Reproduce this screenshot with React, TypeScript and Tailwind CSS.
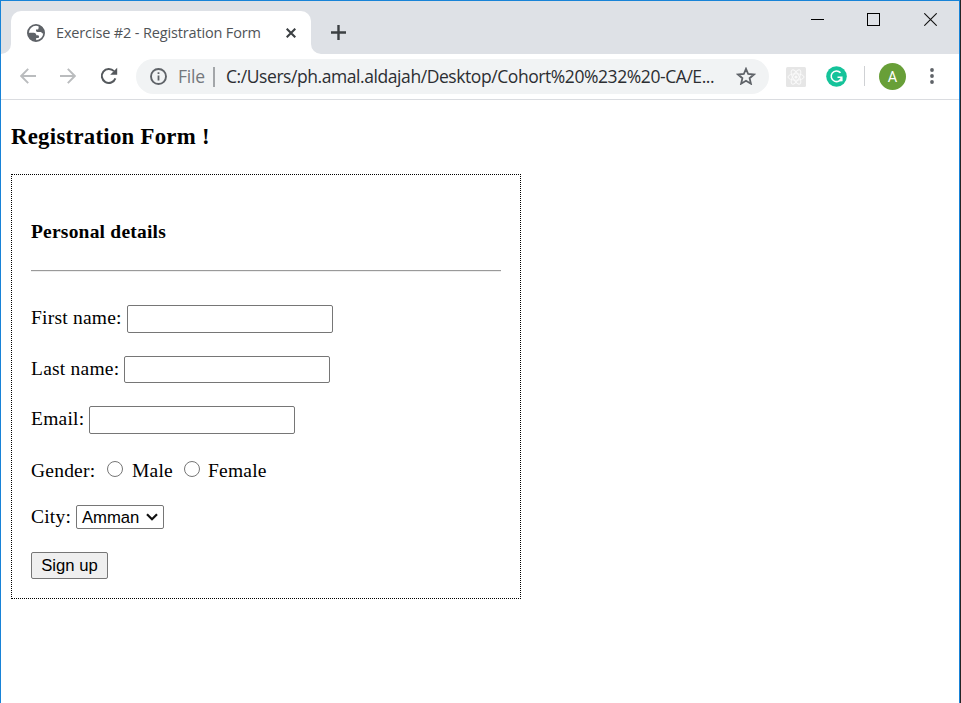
import type { ReactNode } from 'react';

const ui = "font-['Open_Sans',sans-serif]";

function Tab() {
  return (
    <div className="relative mt-[10px] flex h-[43px] w-[300px] items-center rounded-t-[10px] bg-white pl-[16px]">
      <svg className="absolute bottom-0 -left-[10px]" width="10" height="10" viewBox="0 0 10 10">
        <path d="M10 0v10H0A10 10 0 0 0 10 0z" fill="#fff" />
      </svg>
      <svg className="absolute -right-[10px] bottom-0" width="10" height="10" viewBox="0 0 10 10">
        <path d="M0 0v10h10A10 10 0 0 1 0 0z" fill="#fff" />
      </svg>
      <svg width="18" height="18" viewBox="0 0 18 18">
        <circle cx="9" cy="9" r="8.1" fill="#fff" stroke="#5f6368" strokeWidth="1.8" />
        <path
          d="M10.5.9C14.800 1.500 17.300 4.800 17.200 8.800l-1.700.8c-.5-1-1.200-1.700-2.400-1.700h-2.700c-.9 0-1.400-.5-1.400-1.300V5.500h1.300c.9 0 1.200-.5 1.200-1.300V3.200h.6zM.9 8.700h5.800c1.700 0 2.600 1 2.600 2.500h1.300c.9 0 1.500.6 1.500 1.500 0 .8-.6 1.300-1.500 1.300H9.200v3.100C4.500 17.200.9 13.500.9 8.700z"
          fill="#5f6368"
        />
      </svg>
      <span className={`${ui} ml-[11px] w-[206px] text-[14.500px] tracking-[-0.150px] whitespace-nowrap text-[#505458]`}>
        Exercise #2 - Registration Form
      </span>
      <svg className="ml-[24px]" width="10" height="10" viewBox="0 0 10 10">
        <path d="M.7.7l8.600 8.600M9.300.7L.7 9.300" stroke="#3c4043" strokeWidth="2.100" />
      </svg>
    </div>
  );
}

function TabStrip() {
  return (
    <div className="flex h-[53px] bg-[#dee1e6] pl-[10px]">
      <Tab />
      <svg className="mt-[24px] ml-[20px]" width="15" height="15" viewBox="0 0 15 15">
        <path d="M7.500 0v15M0 7.500h15" stroke="#3c4043" strokeWidth="2.400" />
      </svg>
      <div className="mt-[12px] mr-[22px] ml-auto flex gap-[43px]">
        <svg width="13" height="13" viewBox="0 0 13 13" shapeRendering="crispEdges">
          <path d="M0 6.500h13" stroke="#000" />
        </svg>
        <svg width="13" height="13" viewBox="0 0 13 13" shapeRendering="crispEdges">
          <path d="M.5.5h12v12H.5z" fill="none" stroke="#000" />
        </svg>
        <svg className="ml-px" width="13" height="13" viewBox="0 0 13 13">
          <path d="M.3.3l12.400 12.400M12.700.3L.3 12.700" stroke="#111" strokeWidth="1.100" />
        </svg>
      </div>
    </div>
  );
}

function Toolbar() {
  return (
    <div className="flex h-[46px] items-center border-b border-[#dadce0] bg-white pl-[19px]">
      <svg className="mb-px" width="16" height="16" viewBox="0 0 16 16" fill="none" stroke="#babcbe" strokeWidth="1.900">
        <path d="M16 8H1.500M8.200.8L1.200 8l7 7.200" />
      </svg>
      <svg className="mb-px ml-[24px]" width="16" height="16" viewBox="0 0 16 16" fill="none" stroke="#babcbe" strokeWidth="1.900">
        <path d="M0 8h14.500M7.800.8l7 7.200-7 7.200" />
      </svg>
      <svg className="mb-px ml-[24px]" width="18" height="18" viewBox="0 0 18 18">
        <path d="M15.400 11.300A7 7 0 1 1 14 4.200" fill="none" stroke="#55595d" strokeWidth="2" />
        <path d="M17.200.8v7h-7z" fill="#55595d" />
      </svg>
      <div className="ml-[18px] flex h-[35px] w-[633px] items-center rounded-full bg-[#f1f3f4] pl-[14px]">
        <svg width="17" height="17" viewBox="0 0 17 17">
          <circle cx="8.500" cy="8.500" r="7.500" fill="none" stroke="#5f6368" strokeWidth="1.900" />
          <path d="M8.500 7.400v5M8.500 4.200v1.900" stroke="#5f6368" strokeWidth="1.800" />
        </svg>
        <span className={`${ui} ml-[11px] w-[28px] text-[17.500px] tracking-[-0.200px] text-[#74787c]`}>File</span>
        <span className="ml-[7px] h-[20px] w-[2px] bg-[#a3a6a9]" />
        <span className={`${ui} ml-[11px] w-[490px] text-[17.500px] tracking-[-0.430px] whitespace-nowrap text-[#2c2e32]`}>
          C:/Users/ph.amal.aldajah/Desktop/Cohort%20%232%20-CA/E...
        </span>
        <svg className="mb-px ml-[20px]" width="20" height="18" viewBox="0 0 20 18">
          <path
            d="M10 1.800l2.200 5.200 5.700.5-4.300 3.700 1.300 5.500-4.900-2.900-4.900 2.900 1.300-5.500L2.100 7.500l5.700-.5z"
            fill="none"
            stroke="#5f6368"
            strokeWidth="1.800"
          />
        </svg>
      </div>
      <svg className="ml-[17px]" width="20" height="20" viewBox="0 0 20 20" fill="none">
        <rect width="20" height="20" rx="1.500" fill="#e6e6e6" />
        <g stroke="#fafafa" strokeWidth="1">
          <ellipse cx="10" cy="10" rx="8" ry="3.200" />
          <ellipse cx="10" cy="10" rx="8" ry="3.200" transform="rotate(60 10 10)" />
          <ellipse cx="10" cy="10" rx="8" ry="3.200" transform="rotate(120 10 10)" />
        </g>
        <circle cx="10" cy="10" r="1.600" fill="#fafafa" />
      </svg>
      <svg className="ml-[20px]" width="21" height="21" viewBox="0 0 21 21" fill="none">
        <circle cx="10.500" cy="10.500" r="10.300" fill="#15c39a" />
        <path d="M14.500 6.800A5.300 5.300 0 1 0 15.700 11.200h-4.200M13.500 14.700l2.300-.1v-3.200" stroke="#fff" strokeWidth="1.600" />
      </svg>
      <span className="mb-px ml-[17px] h-[20px] w-px bg-[#cfd1d4]" />
      <span className="ml-[14px] flex size-[27px] items-center justify-center rounded-full bg-[#689f38] pt-[2px] font-[Roboto,sans-serif] text-[14.500px] text-white">
        A
      </span>
      <svg className="mb-px ml-[24px]" width="4" height="16" viewBox="0 0 4 16" fill="#5f6368">
        <circle cx="2" cy="2" r="1.900" />
        <circle cx="2" cy="8" r="1.900" />
        <circle cx="2" cy="14" r="1.900" />
      </svg>
    </div>
  );
}

function Row({ className, children }: { className: string; children: ReactNode }) {
  return <div className={`flex h-[28px] items-start leading-[26px] ${className}`}>{children}</div>;
}

const field = 'w-[206px] rounded-[2px] border border-[#767676] bg-white outline-none';
const radio = 'mt-[3px] size-[16px] appearance-none rounded-full border border-[#767676] bg-white';

function RegistrationForm() {
  return (
    <main className="pl-[10px] font-['Liberation_Serif','Times_New_Roman',serif] text-[19.500px] tracking-[0.220px] text-black">
      <h3 className="mt-[23px] h-[28px] text-[22.800px] leading-[28px] font-bold tracking-[0.270px] whitespace-nowrap">
        Registration Form !
      </h3>
      <form className="mt-[23px] h-[425px] w-[510px] border border-dotted border-black px-[19px]">
        <h4 className="mt-[44px] h-[24px] text-[19.500px] leading-[26px] font-bold tracking-[0.210px]">Personal details</h4>
        <hr className="mt-[27px] h-[2px] border-t border-b border-t-[#9a9a9a] border-b-[#eeeeee]" />
        <Row className="mt-[33px]">
          <label className="w-[96px]">First name:</label>
          <input className={`${field} h-[28px]`} />
        </Row>
        <Row className="mt-[23px]">
          <label className="w-[93px]">Last name:</label>
          <input className={`${field} h-[27px]`} />
        </Row>
        <Row className="mt-[22px]">
          <label className="w-[58px]">Email:</label>
          <input className={`${field} h-[28px]`} />
        </Row>
        <Row className="mt-[24px]">
          <span className="w-[76px]">Gender:</span>
          <input type="radio" name="gender" className={radio} />
          <label className="ml-[9px] w-[52px]">Male</label>
          <input type="radio" name="gender" className={radio} />
          <label className="ml-[8px]">Female</label>
        </Row>
        <Row className="mt-[18px]">
          <label className="w-[45px]">City:</label>
          <div className="mt-px flex h-[24px] w-[88px] items-center rounded-[2px] border border-[#767676] pl-[5px] font-['Liberation_Sans',Arial,sans-serif] text-[16.667px] tracking-normal">
            <span className="w-[59px] pt-px">Amman</span>
            <svg className="ml-[5px]" width="12" height="8" viewBox="0 0 12 8">
              <path d="M1 1.200l5 5 5-5" fill="none" stroke="#111" strokeWidth="2.200" />
            </svg>
          </div>
        </Row>
        <button
          type="button"
          className="mt-[20px] flex h-[27px] w-[77px] items-center justify-center rounded-[2px] border border-[#767676] bg-[#efefef] font-['Liberation_Sans',Arial,sans-serif] text-[16.667px] leading-[20px] tracking-normal whitespace-nowrap"
        >
          Sign up
        </button>
      </form>
    </main>
  );
}

export default function App() {
  return (
    <div className="h-[703px] w-[961px] overflow-hidden border-r border-[#252525] bg-white">
      <div className="h-full border-x border-t border-[#1883d7]">
        <TabStrip />
        <Toolbar />
        <RegistrationForm />
      </div>
    </div>
  );
}
